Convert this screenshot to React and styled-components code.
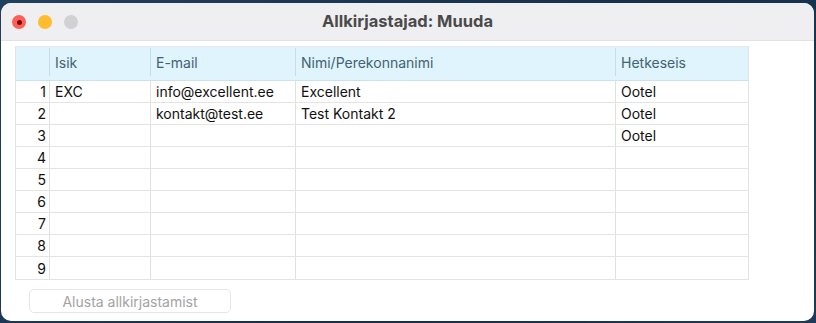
import styled, { createGlobalStyle } from "styled-components";

const GlobalStyle = createGlobalStyle`
  html, body {
    margin: 0;
    padding: 0;
    background: #1c3651;
    font-family: Inter, "Liberation Sans", sans-serif;
  }
`;

const columns = [
  { key: "nr", label: "", width: 33 },
  { key: "isik", label: "Isik", width: 101 },
  { key: "email", label: "E-mail", width: 145 },
  { key: "name", label: "Nimi/Perekonnanimi", width: 320 },
  { key: "status", label: "Hetkeseis", width: 133 },
];

const rows = [
  { isik: "EXC", email: "info@excellent.ee", name: "Excellent", status: "Ootel" },
  { isik: "", email: "kontakt@test.ee", name: "Test Kontakt 2", status: "Ootel" },
  { isik: "", email: "", name: "", status: "Ootel" },
  {},
  {},
  {},
  {},
  {},
  {},
];

const gridTemplate = columns.map((c) => `${c.width}px`).join(" ");

function App() {
  return (
    <>
      <GlobalStyle />
      <StDesktop>
        <StWindow>
          <StTitleBar>
            <StLights>
              <StLight $color="#fe5f57" $dot />
              <StLight $color="#febc2e" />
              <StLight $color="#d1d1d3" />
            </StLights>
            <StTitle>Allkirjastajad: Muuda</StTitle>
          </StTitleBar>

          <StContent>
            <StTable>
              <StHeaderRow>
                {columns.map((c) => (
                  <StHeaderCell key={c.key} $first={c.key === "nr"}>
                    {c.label}
                  </StHeaderCell>
                ))}
              </StHeaderRow>
              {rows.map((row, i) => (
                <StRow key={i}>
                  <StNumberCell>{i + 1}</StNumberCell>
                  <StCell>{row.isik}</StCell>
                  <StCell>{row.email}</StCell>
                  <StCell>{row.name}</StCell>
                  <StCell>{row.status}</StCell>
                </StRow>
              ))}
            </StTable>

            <StButton disabled>Alusta allkirjastamist</StButton>
          </StContent>
        </StWindow>
      </StDesktop>
    </>
  );
}

export default App;

const StDesktop = styled.div`
  width: 816px;
  height: 323px;
  padding: 3px 0 0 1px;
  box-sizing: border-box;
  background: linear-gradient(135deg, #223f5c, #16304a 60%, #1d3a56);
  overflow: hidden;
`;

const StWindow = styled.div`
  width: 813px;
  height: 318px;
  background: #ffffff;
  border-radius: 10px;
  overflow: hidden;
  display: flex;
  flex-direction: column;
`;

const StTitleBar = styled.div`
  position: relative;
  height: 37px;
  flex-shrink: 0;
  background: #efeff1;
  border-bottom: 1px solid #e2e2e4;
  display: flex;
  align-items: center;
  justify-content: center;
`;

const StLights = styled.div`
  position: absolute;
  left: 11px;
  top: 12px;
  display: flex;
  gap: 12px;
`;

const StLight = styled.span`
  width: 14px;
  height: 14px;
  border-radius: 50%;
  background: ${(p) => p.$color};
  display: flex;
  align-items: center;
  justify-content: center;

  &::after {
    content: "";
    display: ${(p) => (p.$dot ? "block" : "none")};
    width: 5px;
    height: 5px;
    border-radius: 50%;
    background: #7a0a0a;
  }
`;

const StTitle = styled.span`
  font-size: 16.5px;
  font-weight: 700;
  color: #4a4a4a;
  margin-top: -2px;
`;

const StContent = styled.div`
  flex: 1;
  padding: 5px 0 0 14px;
  display: flex;
  flex-direction: column;
  align-items: flex-start;
`;

const StTable = styled.div`
  display: flex;
  flex-direction: column;
  border: 1px solid #e3e3e3;
  border-top-color: #e8e8e8;
  width: 734px;
  box-sizing: border-box;
`;

const StHeaderRow = styled.div`
  display: grid;
  grid-template-columns: ${gridTemplate};
  height: 33px;
  background: #dff4fc;
  border-bottom: 1px solid #c9e2ec;
  align-items: center;
`;

const StHeaderCell = styled.div`
  height: 28px;
  display: flex;
  align-items: center;
  padding-left: 5px;
  font-size: 14px;
  color: #436373;
  border-left: ${(p) => (p.$first ? "none" : "1px solid #c5dde6")};
  margin-top: -3px;
`;

const StRow = styled.div`
  display: grid;
  grid-template-columns: ${gridTemplate};
  height: 22px;
  border-bottom: 1px solid #e4e4e4;
  box-sizing: border-box;

  &:last-child {
    border-bottom: none;
  }
`;

const StCell = styled.div`
  display: flex;
  align-items: center;
  padding-left: 5px;
  font-size: 14px;
  color: #111;
  border-left: 1px solid #e0e0e0;
  white-space: nowrap;
`;

const StNumberCell = styled.div`
  display: flex;
  align-items: center;
  justify-content: flex-end;
  padding-right: 3px;
  font-size: 14px;
  color: #111;
`;

const StButton = styled.button`
  margin: 9px 0 0 14px;
  width: 202px;
  height: 24px;
  background: #ffffff;
  border: 1px solid #e6e6e6;
  border-radius: 5px;
  font-family: Inter, "Liberation Sans", sans-serif;
  font-size: 14px;
  color: #a3a3a3;
  padding: 0;
`;
